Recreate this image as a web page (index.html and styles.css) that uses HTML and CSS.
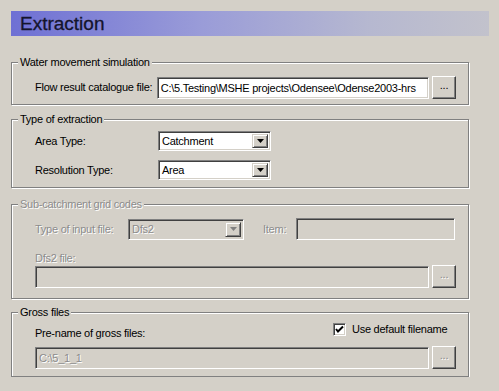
FILE: index.html
```html
<!DOCTYPE html>
<html>
    <head>
        <title>Extraction</title>
        <link rel="stylesheet" href="styles.css">
    </head>
    <body>
        <div class="page">
            <div class="banner">Extraction</div>

            <!--WATER MOVEMENT-->
            <div class="group g-water">
                <span class="legend">Water movement simulation</span>
                <div class="row">
                    <span class="lbl w-flow">Flow result catalogue file:</span>
                    <div class="field f-flow">C:\5.Testing\MSHE projects\Odensee\Odense2003-hrs</div>
                    <div class="btn">...</div>
                </div>
            </div>

            <!--TYPE OF EXTRACTION-->
            <div class="group g-type">
                <span class="legend">Type of extraction</span>
                <div class="row">
                    <span class="lbl w-type">Area Type:</span>
                    <div class="combo c-type">
                        <span class="combo-text">Catchment</span>
                        <span class="arrow"><svg width="7" height="4" viewBox="0 0 7 4"><polygon points="0,0 7,0 3.5,4" fill="#000"/></svg></span>
                    </div>
                </div>
                <div class="row">
                    <span class="lbl w-type">Resolution Type:</span>
                    <div class="combo c-type">
                        <span class="combo-text">Area</span>
                        <span class="arrow"><svg width="7" height="4" viewBox="0 0 7 4"><polygon points="0,0 7,0 3.5,4" fill="#000"/></svg></span>
                    </div>
                </div>
            </div>

            <!--SUB-CATCHMENT-->
            <div class="group g-sub off">
                <span class="legend">Sub-catchment grid codes</span>
                <div class="row">
                    <span class="lbl w-input">Type of input file:</span>
                    <div class="combo c-input">
                        <span class="combo-text">Dfs2</span>
                        <span class="arrow"><svg width="7" height="4" viewBox="0 0 7 4"><polygon points="0,0 7,0 3.5,4" fill="#808080"/></svg></span>
                    </div>
                    <span class="lbl w-item">Item:</span>
                    <div class="field f-item"></div>
                </div>
                <div class="lbl cap-dfs">Dfs2 file:</div>
                <div class="row">
                    <div class="field f-long"></div>
                    <div class="btn">...</div>
                </div>
            </div>

            <!--GROSS FILES-->
            <div class="group g-gross">
                <span class="legend">Gross files</span>
                <div class="row top">
                    <span class="lbl cap-gross">Pre-name of gross files:</span>
                    <label class="chk">
                        <span class="box"><svg width="9" height="9" viewBox="0 0 9 9"><polyline points="1,4 3,6.5 8,1.5" fill="none" stroke="#000" stroke-width="2"/></svg></span>
                        Use default filename
                    </label>
                </div>
                <div class="row gap">
                    <div class="field f-long dim">C:\5_1_1</div>
                    <div class="btn dim">...</div>
                </div>
            </div>
        </div>
    </body>
</html>
```
FILE: styles.css
```css
body{
    margin: 0;
    background-color: #d4d0c8;
    font-family: "Liberation Sans", Arial, sans-serif;
    font-size: 11px;
    letter-spacing: -0.25px;
    color: #000;
}

.page{
    padding: 11px 0 0 11px;
    width: 478px;
}

.banner{
    height: 25px;
    line-height: 25px;
    padding-left: 9px;
    font-size: 19px;
    letter-spacing: 0;
    color: #14142c;
    -webkit-text-stroke: 0.3px #14142c;
    background: linear-gradient(to right, #6e70d4, #9a9cd8 40%, #b6b8d0 75%, #c2c2cc);
}

.group{
    position: relative;
    box-sizing: border-box;
    width: 458px;
    border: 1px solid #808080;
    box-shadow: 1px 1px 0 #fff, inset 1px 1px 0 #fff;
}

.legend{
    position: absolute;
    top: -7px;
    left: 6px;
    padding: 0 2px;
    line-height: 13px;
    background-color: #d4d0c8;
}

.g-water{
    margin-top: 26px;
    padding: 13px 12px 5px 23px;
}

.g-type{
    margin-top: 14px;
    padding: 11px 12px 7px 23px;
}

.g-type .row + .row{
    margin-top: 9px;
}

.g-sub{
    margin-top: 16px;
    padding: 13px 12px 10px 23px;
}

.g-gross{
    margin-top: 13px;
    padding: 10px 12px 7px 23px;
}

.row{
    display: flex;
    align-items: center;
}

.row.top{
    align-items: flex-start;
    justify-content: space-between;
}

.row.gap{
    margin-top: 6px;
}

.lbl{
    line-height: 13px;
    white-space: nowrap;
}

.w-flow{ width: 122px; }
.w-type{ width: 123px; }
.w-input{ width: 93px; }
.w-item{ width: 33px; margin-left: 19px; }

.cap-dfs{
    margin: 12px 0 0;
}

.cap-gross{
    margin-top: 4px;
}

/* sunken edit box */
.field{
    box-sizing: border-box;
    height: 22px;
    padding: 3px 2px 0 3px;
    background-color: #fff;
    border-top: 1px solid #808080;
    border-left: 1px solid #808080;
    border-bottom: 1px solid #fff;
    border-right: 1px solid #fff;
    box-shadow: inset 1px 1px 0 #404040, inset -1px -1px 0 #d4d0c8;
    white-space: nowrap;
    overflow: hidden;
    line-height: 14px;
}

.f-flow{ width: 273px; }
.f-item{ width: 159px; }
.f-long{ width: 394px; }

.off .field,
.field.dim{
    background-color: #d4d0c8;
}

.off .lbl,
.off .legend,
.off .combo-text,
.dim{
    color: #8c8c8c;
    text-shadow: 1px 1px 0 #fff;
}

/* raised push button */
.btn{
    box-sizing: border-box;
    width: 24px;
    height: 23px;
    margin-left: 3px;
    text-align: center;
    line-height: 17px;
    background-color: #d4d0c8;
    border-top: 1px solid #fff;
    border-left: 1px solid #fff;
    border-bottom: 1px solid #404040;
    border-right: 1px solid #404040;
    box-shadow: inset -1px -1px 0 #808080;
}

.off .btn{
    color: #8c8c8c;
    text-shadow: 1px 1px 0 #fff;
}

.combo{
    box-sizing: border-box;
    display: flex;
    align-items: center;
    justify-content: space-between;
    height: 20px;
    padding: 2px 2px 2px 3px;
    background-color: #fff;
    border-top: 1px solid #808080;
    border-left: 1px solid #808080;
    border-bottom: 1px solid #fff;
    border-right: 1px solid #fff;
    box-shadow: inset 1px 1px 0 #404040, inset -1px -1px 0 #d4d0c8;
}

.c-type{ width: 113px; }
.c-input{ width: 116px; height: 21px; }

.off .combo{
    background-color: #d4d0c8;
}

.combo-text{
    line-height: 13px;
}

.arrow{
    box-sizing: border-box;
    display: flex;
    align-items: center;
    justify-content: center;
    width: 16px;
    height: 100%;
    background-color: #d4d0c8;
    border-top: 1px solid #d4d0c8;
    border-left: 1px solid #d4d0c8;
    border-bottom: 1px solid #404040;
    border-right: 1px solid #404040;
    box-shadow: inset 1px 1px 0 #fff, inset -1px -1px 0 #808080;
}

.chk{
    display: flex;
    align-items: center;
    width: 123px;
    line-height: 13px;
}

.box{
    box-sizing: border-box;
    display: flex;
    align-items: center;
    justify-content: center;
    width: 13px;
    height: 13px;
    margin-right: 6px;
    background-color: #fff;
    border-top: 1px solid #808080;
    border-left: 1px solid #808080;
    border-bottom: 1px solid #fff;
    border-right: 1px solid #fff;
    box-shadow: inset 1px 1px 0 #404040, inset -1px -1px 0 #d4d0c8;
}
```
